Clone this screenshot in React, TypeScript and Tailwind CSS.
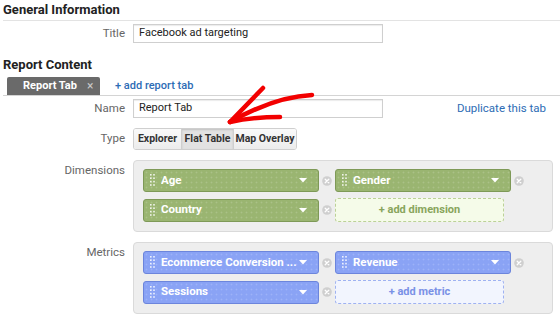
import React from 'react';

type Chip = { label: string };

function DragDots() {
  return (
    <svg width="5" height="13" viewBox="0 0 5 13" className="shrink-0">
      {[0, 1, 2, 3].map((r) => (
        <g key={r}>
          <rect x="0" y={r * 3.4} width="1.6" height="1.6" fill="rgba(255,255,255,0.85)" />
          <rect x="3.2" y={r * 3.4} width="1.6" height="1.6" fill="rgba(255,255,255,0.85)" />
        </g>
      ))}
    </svg>
  );
}

function RemoveIcon() {
  return (
    <svg width="10" height="10" viewBox="0 0 10 10" className="shrink-0">
      <circle cx="5" cy="5" r="4.8" fill="#cfcfcf" />
      <path d="M3.2 3.2 L6.8 6.8 M6.8 3.2 L3.2 6.8" stroke="#fff" strokeWidth="1.3" strokeLinecap="round" />
    </svg>
  );
}

function Pill({ label, tone }: { label: string; tone: 'green' | 'blue' }) {
  const cls =
    tone === 'green'
      ? 'bg-[#9ab571] border-[#7e9957]'
      : 'bg-[#8aa3f5] border-[#6c85dc]';
  return (
    <div className="flex items-center gap-[3px]">
      <div
        className={`flex h-[23px] w-[176px] items-center rounded-[3px] border pl-[6px] pr-[11px] ${cls} bg-[radial-gradient(rgba(255,255,255,0.16)_0.8px,transparent_1.1px)] bg-[length:5px_5px]`}
      >
        <DragDots />
        <span className="ml-[6px] flex-1 truncate text-[11.5px] font-bold text-white">{label}</span>
        <svg width="8" height="5" viewBox="0 0 8 5" className="shrink-0">
          <path d="M0 0 H8 L4 4.5 Z" fill="#fff" />
        </svg>
      </div>
      <RemoveIcon />
    </div>
  );
}

function AddBox({ label, tone }: { label: string; tone: 'green' | 'blue' }) {
  const cls =
    tone === 'green'
      ? 'bg-[#f5fbe9] border-[#bcd197] text-[#88a55c]'
      : 'bg-[#f2f5fe] border-[#9fb2f1] text-[#7a91e6]';
  return (
    <div
      className={`flex h-[24px] w-[169px] items-center justify-center rounded-[3px] border border-dashed text-[11px] font-bold ${cls}`}
    >
      {label}
    </div>
  );
}

function FieldRow({ label, children, top }: { label: string; children: React.ReactNode; top?: boolean }) {
  return (
    <div className={`flex ${top ? 'items-start' : 'items-center'}`}>
      <div className={`w-[125px] shrink-0 text-right text-[11.5px] text-[#666] ${top ? 'pt-[2px]' : ''}`}>{label}</div>
      <div className="ml-[8px] flex flex-1 items-center">{children}</div>
    </div>
  );
}

function ChipBox({ rows }: { rows: React.ReactNode[][] }) {
  return (
    <div className="flex w-[420px] flex-col gap-[6px] rounded-[4px] border border-[#dadada] bg-[#eeeeee] px-[9px] pb-[9px] pt-[8px]">
      {rows.map((r, i) => (
        <div key={i} className="flex items-center gap-[3px]">
          {r}
        </div>
      ))}
    </div>
  );
}

export default function App() {
  const dims: Chip[] = [{ label: 'Age' }, { label: 'Gender' }, { label: 'Country' }];
  return (
    <div className="relative h-[326px] w-[560px] overflow-hidden bg-white font-[Roboto,sans-serif] text-[#222]">
      {/* General information */}
      <div className="ml-[3px] h-[21px] border-b border-[#e3e3e3] text-[13px] font-bold leading-[20px]">
        General Information
      </div>
      <div className="mt-[3px]">
        <FieldRow label="Title">
          <div className="flex h-[19px] w-[250px] items-center border border-[#cfcfcf] px-[5px] text-[11px] text-[#222] shadow-[inset_0_1px_1px_rgba(0,0,0,0.08)]">
            Facebook ad targeting
          </div>
        </FieldRow>
      </div>

      {/* Report content */}
      <div className="ml-[3px] mt-[12px] h-[20px] text-[13px] font-bold leading-[20px]">Report Content</div>
      <div className="ml-[3px] mt-[3px] flex h-[18px] items-end border-b border-[#d4d4d4]">
        <div className="ml-[4px] flex h-[18px] w-[93px] items-center rounded-t-[2px] bg-[#6a6a6a] pl-[16px] text-[11px] font-bold text-white">
          Report Tab
          <span className="ml-[10px] text-[12px] font-normal text-[#c9c9c9]">×</span>
        </div>
        <div className="ml-[15px] self-center text-[11px] font-medium text-[#2d6cb5]">+ add report tab</div>
      </div>

      <div className="mt-[3px]">
        <FieldRow label="Name">
          <div className="flex h-[19px] w-[250px] items-center border border-[#cfcfcf] px-[5px] text-[11px] text-[#222] shadow-[inset_0_1px_1px_rgba(0,0,0,0.08)]">
            Report Tab
          </div>
          <div className="ml-auto mr-[14px] text-[11.5px] text-[#2d6cb5]">Duplicate this tab</div>
        </FieldRow>
      </div>

      <div className="mt-[10px]">
        <FieldRow label="Type">
          <div className="flex h-[22px] overflow-hidden rounded-[3px] border border-[#cfcfcf] text-[10.5px] font-bold text-[#333]">
            <div className="flex w-[47px] items-center justify-center bg-[linear-gradient(#fafafa,#ececec)]">Explorer</div>
            <div className="flex w-[52px] items-center justify-center border-l border-[#cfcfcf] bg-[#e2e2e2] shadow-[inset_0_1px_2px_rgba(0,0,0,0.15)]">
              Flat Table
            </div>
            <div className="flex w-[63px] items-center justify-center border-l border-[#cfcfcf] bg-[linear-gradient(#fafafa,#ececec)]">
              Map Overlay
            </div>
          </div>
        </FieldRow>
      </div>

      <div className="mt-[10px]">
        <FieldRow label="Dimensions" top>
          <ChipBox
            rows={[
              [<Pill key="a" label={dims[0].label} tone="green" />, <Pill key="b" label={dims[1].label} tone="green" />],
              [<Pill key="c" label={dims[2].label} tone="green" />, <AddBox key="d" label="+ add dimension" tone="green" />],
            ]}
          />
        </FieldRow>
      </div>

      <div className="mt-[10px]">
        <FieldRow label="Metrics" top>
          <ChipBox
            rows={[
              [<Pill key="a" label="Ecommerce Conversion ..." tone="blue" />, <Pill key="b" label="Revenue" tone="blue" />],
              [<Pill key="c" label="Sessions" tone="blue" />, <AddBox key="d" label="+ add metric" tone="blue" />],
            ]}
          />
        </FieldRow>
      </div>

      {/* red annotation arrow */}
      <svg className="pointer-events-none absolute left-0 top-0" width="560" height="326" viewBox="0 0 560 326">
        <g stroke="#f20000" strokeWidth="4.5" strokeLinecap="round" strokeLinejoin="round" fill="none">
          <path d="M312 95 C 290 96, 262 104, 230 122" />
          <path d="M230 122 L 263 88" />
          <path d="M230 122 C 248 118, 265 117, 280 117" />
        </g>
      </svg>
    </div>
  );
}
